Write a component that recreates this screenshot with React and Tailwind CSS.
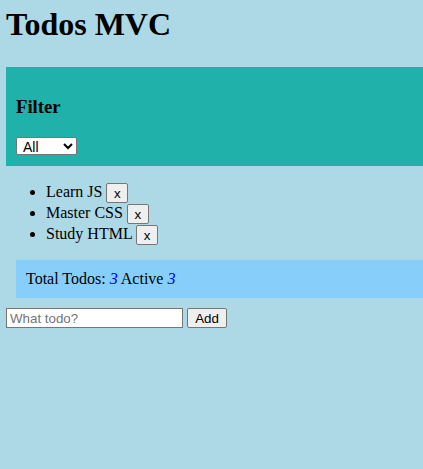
import React from "react";

const todos = ["Learn JS", "Master CSS", "Study HTML"];

export default function App() {
  return (
    <div className="min-h-[469px] bg-[#add8e6] p-[6px] text-black" style={{ fontFamily: '"Liberation Serif", serif' }}>
      <h1 className="mb-[24px] text-[32px] font-bold leading-[37px]">Todos MVC</h1>
      <section className="mr-[-6px] bg-[#20b2aa] px-[10px] pt-[29px] pb-[11px]">
        <h3 className="text-[18.72px] font-bold leading-[22px]">Filter</h3>
        <select
          className="mt-[19px] block h-[18px] w-[61px] rounded-[2px] border border-[#767676] bg-white pl-[2px] text-[14px] leading-[16px] text-black"
          style={{ fontFamily: '"Liberation Sans", Arial, sans-serif' }}
          defaultValue="all"
        >
          <option value="all">All</option>
          <option value="active">Active</option>
          <option value="done">Done</option>
        </select>
      </section>
      <ul className="mt-[15px] mb-[16px] list-disc pl-[40px] text-[16px]">
        {todos.map((t) => (
          <li key={t} className="h-[21px] leading-[21px]">
            {t}{" "}
            <button
              className="inline-flex h-[20px] w-[22px] items-center justify-center rounded-[2px] border border-[#767676] bg-[#efefef] text-[13.33px] align-middle"
              style={{ fontFamily: '"Liberation Sans", Arial, sans-serif' }}
            >
              x
            </button>
          </li>
        ))}
      </ul>
      <div className="mr-[-6px] ml-[10px] bg-[#87cefa] p-[10px] text-[16px] leading-[18px]">
        Total Todos: <em className="text-[#0000ff]">3</em> Active <em className="text-[#0000ff]">3</em>
      </div>
      <div className="mt-[10px] flex items-center gap-[4px]" style={{ fontFamily: '"Liberation Sans", Arial, sans-serif' }}>
        <input
          className="h-[20px] w-[177px] border border-[#767676] bg-white px-[3px] text-[13.33px] placeholder:text-[#757575]"
          placeholder="What todo?"
        />
        <button className="h-[20px] w-[40px] rounded-[2px] border border-[#767676] bg-[#efefef] text-[13.33px]">Add</button>
      </div>
    </div>
  );
}
